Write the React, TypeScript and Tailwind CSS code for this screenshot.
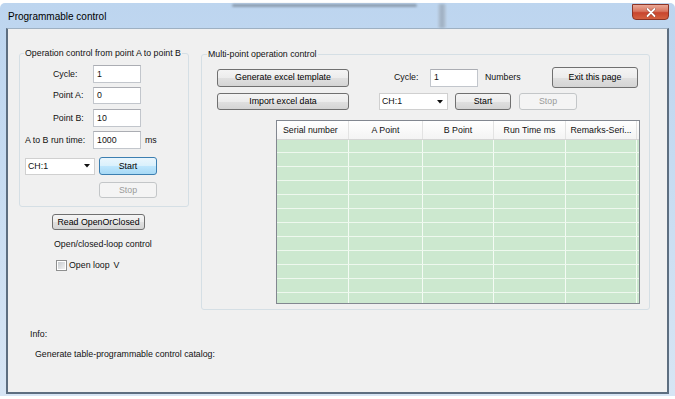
import React from "react";

const BTN =
  "flex items-center justify-center rounded-[3px] border border-[#707070] bg-[linear-gradient(to_bottom,#f4f4f4_0%,#ececec_50%,#e0e0e0_51%,#d4d4d4_100%)] text-black";
const BTN_DEFAULT =
  "flex items-center justify-center rounded-[3px] border border-[#3c7fb1] bg-[linear-gradient(to_bottom,#eaf6fd_0%,#d9f0fc_50%,#bee6fd_51%,#a7d9f5_100%)] text-black";
const BTN_DISABLED =
  "flex items-center justify-center rounded-[3px] border border-[#c3c6c8] bg-[#f4f4f4] text-[#9a9a9a]";

function TextBox({ value, h = "h-[18px]" }: { value: string; h?: string }) {
  return (
    <div className={`flex ${h} w-[48px] items-center border border-[#c2c6cc] border-t-[#abadb3] bg-white pl-[3px]`}>
      {value}
    </div>
  );
}

function Combo({ w }: { w: string }) {
  return (
    <div className={`flex h-[17px] ${w} items-center justify-between border border-[#d0d0d0] bg-white pl-[2px] pr-[4px]`}>
      <span>CH:1</span>
      <svg width="6" height="4" viewBox="0 0 6 4">
        <path d="M0 0 L6 0 L3 3.5 Z" fill="#111" />
      </svg>
    </div>
  );
}

const COLS = [
  { w: "w-[72px]", label: "Serial number", align: "justify-start pl-[6px]" },
  { w: "w-[74px]", label: "A Point", align: "justify-center" },
  { w: "w-[71px]", label: "B Point", align: "justify-center" },
  { w: "w-[72px]", label: "Run Time ms", align: "justify-center" },
  { w: "w-[71px]", label: "Remarks-Seri...", align: "justify-center" },
];

export default function App() {
  const rows = Array.from({ length: 12 }, (_, i) => i);
  return (
    <div className="h-[399px] w-[675px] overflow-hidden bg-white font-['Liberation_Sans',Arial,sans-serif] text-[8.8px] leading-[11px] text-[#111]">
      <div className="mt-[3px] flex h-[393px] w-[675px] flex-col rounded-t-[5px] bg-[linear-gradient(to_bottom,#bdd5ef_0%,#c6dbf1_40%,#d7e5f4_100%)]">
        {/* Title bar */}
        <div className="relative flex h-[25px] items-start justify-between">
          <div className="absolute left-[232px] top-[1px] h-[3px] w-[185px] rounded-full bg-[#6b7886] opacity-60 blur-[1px]" />
          <div className="absolute left-[438px] top-[1px] h-[24px] w-[8px] bg-[linear-gradient(to_right,#b7c6d6,#8e9cab,#b7c6d6)] opacity-70 blur-[1px]" />
          <span className="relative pl-[8px] pt-[8px] text-[10px] leading-[12px] text-black">Programmable control</span>
          <div className="relative mr-[6px] mt-[1px] flex h-[16px] w-[37px] items-center justify-center rounded-b-[4px] border border-[#8b3426] bg-[linear-gradient(to_bottom,#eaa896_0%,#d9755f_45%,#c8452e_55%,#d4603f_100%)]">
            <svg width="10" height="9" viewBox="0 0 10 9">
              <path d="M1.5 1 L8.5 8 M8.5 1 L1.5 8" stroke="#5a1a10" strokeWidth="3" strokeLinecap="round" opacity="0.5" />
              <path d="M1.5 1 L8.5 8 M8.5 1 L1.5 8" stroke="#ffffff" strokeWidth="1.8" strokeLinecap="round" />
            </svg>
          </div>
        </div>

        {/* Client area */}
        <div className="mb-[2px] ml-[6px] mr-[6px] flex flex-1 flex-col border-b-2 border-l-2 border-r-2 border-t border-[#5d6e80] border-t-[#9eb0c2] bg-[#f0f0f0]">
          <div className="flex items-start pl-[11px] pt-[19px]">
            {/* Left column */}
            <div className="flex w-[170px] flex-col">
              <fieldset className="h-[159px] rounded-[3px] border border-[#d5dfe5]">
                <legend className="ml-[4px] px-[1px]">Operation control from point A to point B</legend>
                <div className="flex flex-col pt-[6px]">
                  <div className="flex items-center">
                    <span className="w-[73px] pl-[33px]">Cycle:</span>
                    <TextBox value="1" />
                  </div>
                  <div className="mt-[4px] flex items-center">
                    <span className="w-[73px] pl-[33px]">Point A:</span>
                    <TextBox value="0" h="h-[17px]" />
                  </div>
                  <div className="mt-[5px] flex items-center">
                    <span className="w-[73px] pl-[33px]">Point B:</span>
                    <TextBox value="10" />
                  </div>
                  <div className="mt-[4px] flex items-center">
                    <span className="w-[73px] pl-[5px]">A to B run time:</span>
                    <TextBox value="1000" />
                    <span className="ml-[4px]">ms</span>
                  </div>
                  <div className="mt-[8px] flex items-center">
                    <div className="ml-[5px]">
                      <Combo w="w-[70px]" />
                    </div>
                    <div className={`ml-[4px] h-[18px] w-[58px] ${BTN_DEFAULT}`}>Start</div>
                  </div>
                  <div className={`ml-[79px] mt-[7px] h-[16px] w-[58px] ${BTN_DISABLED}`}>Stop</div>
                </div>
              </fieldset>
              <div className={`ml-[33px] mt-[7px] h-[16px] w-[93px] ${BTN}`}>Read OpenOrClosed</div>
              <span className="ml-[35px] mt-[9px]">Open/closed-loop control</span>
              <div className="ml-[37px] mt-[10px] flex items-center">
                <div className="flex h-[11px] w-[11px] items-center justify-center border border-[#8e8f8f] bg-white">
                  <div className="h-[7px] w-[7px] bg-[linear-gradient(to_bottom_right,#c8ccd0,#f2f2f2)]" />
                </div>
                <span className="ml-[2px]">Open loop</span>
                <span className="ml-[4px]">V</span>
              </div>
            </div>

            {/* Right group */}
            <fieldset className="ml-[12px] mt-[1px] h-[261px] w-[449px] rounded-[3px] border border-[#d5dfe5]">
              <legend className="ml-[5px] px-[1px]">Multi-point operation control</legend>
              <div className="flex flex-col pt-[7px]">
                <div className="flex h-[21px] items-center">
                  <div className={`ml-[15px] h-[18px] w-[132px] ${BTN}`}>Generate excel template</div>
                  <span className="ml-[45px] w-[36px]">Cycle:</span>
                  <TextBox value="1" />
                  <span className="ml-[7px] w-[67px]">Numbers</span>
                  <div className={`h-[21px] w-[86px] ${BTN}`}>Exit this page</div>
                </div>
                <div className="mt-[5px] flex h-[17px] items-center">
                  <div className={`ml-[15px] h-[17px] w-[132px] ${BTN}`}>Import excel data</div>
                  <div className="ml-[30px]">
                    <Combo w="w-[69px]" />
                  </div>
                  <div className={`ml-[7px] h-[17px] w-[56px] ${BTN}`}>Start</div>
                  <div className={`ml-[8px] h-[17px] w-[58px] ${BTN_DISABLED}`}>Stop</div>
                </div>
                {/* Table */}
                <div className="ml-[74px] mt-[10px] flex h-[184px] w-[364px] flex-col overflow-hidden border border-[#828790] bg-[#cce8cf]">
                  <div className="flex h-[19px] shrink-0 border-b border-[#d5d5d5] bg-[linear-gradient(to_bottom,#ffffff,#f4f4f4)]">
                    {COLS.map((c) => (
                      <div key={c.label} className={`flex h-full ${c.w} items-center border-r border-[#e3e3e3] ${c.align}`}>
                        {c.label}
                      </div>
                    ))}
                    <div className="flex-1" />
                  </div>
                  {rows.map((r) => (
                    <div
                      key={r}
                      className={`flex ${r === 0 ? "h-[13px]" : "h-[14px]"} shrink-0 border-b border-[#eef8ee]`}
                    >
                      {COLS.map((c) => (
                        <div key={c.label} className={`h-full ${c.w} border-r border-[#f4fbf4]`} />
                      ))}
                      <div className="flex-1" />
                    </div>
                  ))}
                </div>
              </div>
            </fieldset>
          </div>

          <span className="ml-[22px] mt-[19px]">Info:</span>
          <span className="ml-[27px] mt-[9px]">Generate table-programmable control catalog:</span>
        </div>
      </div>
    </div>
  );
}
